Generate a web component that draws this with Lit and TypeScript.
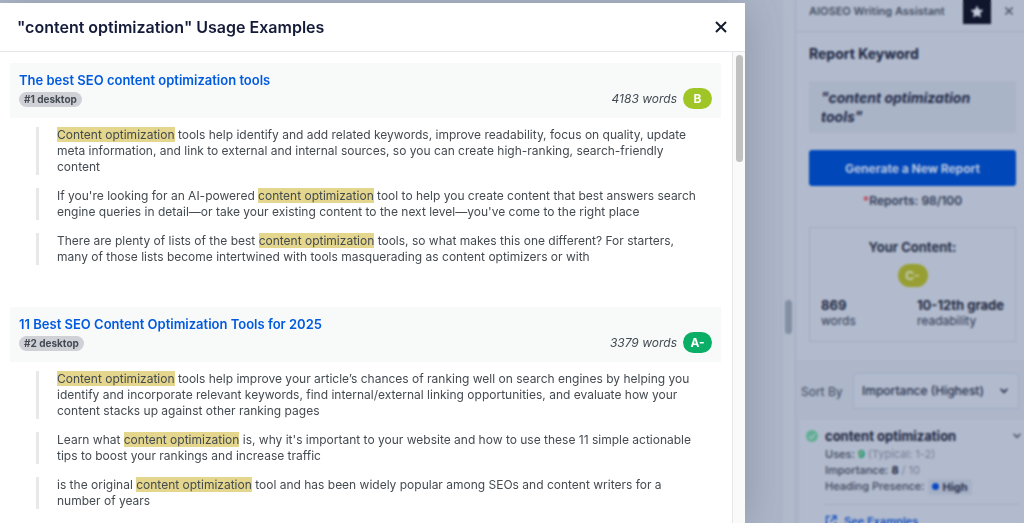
import { LitElement, html, css, svg } from "lit";
import { customElement, property, state } from "lit/decorators.js";

interface Competitor {
  title: string;
  rank: string;
  words: number;
  grade: string;
  tone: "lime" | "green";
  excerpts: string[];
}

const KEYWORD = "content optimization";

const COMPETITORS: Competitor[] = [
  {
    title: "The best SEO content optimization tools",
    rank: "#1 desktop",
    words: 4183,
    grade: "B",
    tone: "lime",
    excerpts: [
      "Content optimization tools help identify and add related keywords, improve readability, focus on quality, update meta information, and link to external and internal sources, so you can create high-ranking, search-friendly content",
      "If you're looking for an AI-powered content optimization tool to help you create content that best answers search engine queries in detail—or take your existing content to the next level—you've come to the right place",
      "There are plenty of lists of the best content optimization tools, so what makes this one different? For starters, many of those lists become intertwined with tools masquerading as content optimizers or with",
    ],
  },
  {
    title: "11 Best SEO Content Optimization Tools for 2025",
    rank: "#2 desktop",
    words: 3379,
    grade: "A-",
    tone: "green",
    excerpts: [
      "Content optimization tools help improve your article’s chances of ranking well on search engines by helping you identify and incorporate relevant keywords, find internal/external linking opportunities, and evaluate how your content stacks up against other ranking pages",
      "Learn what content optimization is, why it's important to your website and how to use these 11 simple actionable tips to boost your rankings and increase traffic",
      "is the original content optimization tool and has been widely popular among SEOs and content writers for a number of years",
    ],
  },
];

const cross = svg`<path d="M2 2 12 12M12 2 2 12" fill="none" stroke="currentColor" stroke-width="2"/>`;
const chevron = svg`<path d="M2 3.5 6 7.5 10 3.5" fill="none" stroke="currentColor" stroke-width="2"/>`;

@customElement("usage-example")
class UsageExample extends LitElement {
  @property({ attribute: false }) item!: Competitor;

  static styles = css`
    :host { display: block; }
    .head {
      display: flex;
      justify-content: space-between;
      align-items: flex-end;
      padding: 8px 9px 9px;
      background: #f8faf9;
    }
    .link {
      display: block;
      font-size: 13px;
      line-height: 18px;
      font-weight: 600;
      color: #005ae0;
      text-decoration: none;
    }
    .rank {
      display: inline-block;
      margin-top: 3px;
      padding: 0 5px;
      border-radius: 8px;
      background: #d0d1d7;
      color: #434a52;
      font-size: 10px;
      line-height: 15px;
      font-weight: 700;
      vertical-align: top;
    }
    .stats {
      display: flex;
      align-items: center;
      gap: 6px;
      font-size: 12px;
      font-style: italic;
      color: #434a52;
    }
    .grade {
      min-width: 29px;
      border-radius: 11px;
      color: #fff;
      font-size: 12px;
      line-height: 21px;
      font-style: normal;
      font-weight: 700;
      text-align: center;
    }
    .lime { background: #9fc626; }
    .green { background: #0aae67; }
    .quotes {
      display: flex;
      flex-direction: column;
      gap: 13px;
      padding: 9px 24px 0 26px;
    }
    .quote {
      margin: 0;
      padding-left: 18px;
      border-left: 3px solid #e8e8eb;
      font-size: 12px;
      line-height: 16px;
      color: #434a50;
    }
    mark { background: #e4d68d; color: inherit; }
  `;

  private highlight(text: string) {
    const at = text.toLowerCase().indexOf(KEYWORD);
    const end = at + KEYWORD.length;
    return html`${text.slice(0, at)}<mark>${text.slice(at, end)}</mark>${text.slice(end)}`;
  }

  render() {
    const { title, rank, words, grade, tone, excerpts } = this.item;
    return html`
      <div class="head">
        <div>
          <a class="link" href="#">${title}</a>
          <span class="rank">${rank}</span>
        </div>
        <div class="stats">
          <span>${words} words</span>
          <span class="grade ${tone}">${grade}</span>
        </div>
      </div>
      <div class="quotes">
        ${excerpts.map((e) => html`<blockquote class="quote">${this.highlight(e)}</blockquote>`)}
      </div>
    `;
  }
}

@customElement("writing-assistant")
class WritingAssistant extends LitElement {
  static styles = css`
    :host {
      display: block;
      background: #b2bbcd;
      border-left: 1px solid #a1abc0;
      color: #2c3650;
      font-size: 12px;
    }
    button { font-family: inherit; border: 0; padding: 0; cursor: pointer; }
    .bar {
      display: flex;
      align-items: flex-start;
      height: 32px;
      padding: 0 10px 0 13px;
      border-bottom: 1px solid #a1abc0;
      box-sizing: border-box;
    }
    .name { flex: 1; font-size: 11px; line-height: 22px; font-weight: 600; color: #454f64; }
    .star {
      display: grid;
      place-items: center;
      width: 28px;
      height: 24px;
      background: #10162c;
      color: #c3cbdb;
    }
    .close { margin-left: 13px; height: 22px; background: none; color: #454f64; line-height: 0; }
    .report { padding: 12px 8px 18px 13px; }
    h2 { margin: 0; font-size: 14px; line-height: 20px; font-weight: 700; color: #18233f; }
    .keyword {
      margin-top: 17px;
      padding: 7px 12px;
      background: #aab4c7;
      font-size: 14px;
      line-height: 19px;
      font-style: italic;
      font-weight: 700;
      color: #1f2a48;
    }
    .generate {
      display: block;
      width: 100%;
      height: 36px;
      margin-top: 17px;
      border-radius: 3px;
      background: #0047b9;
      color: #b9c6e0;
      font-size: 12px;
      font-weight: 700;
    }
    .quota { margin: 7px 0 0; line-height: 16px; font-weight: 600; text-align: center; color: #303a56; }
    .star-note { color: #c23a55; }
    .content {
      margin-top: 18px;
      padding: 10px 11px 12px;
      border: 1px solid #a1abc0;
      text-align: center;
    }
    h3 { margin: 0; font-size: 13px; line-height: 18px; font-weight: 700; color: #262f48; }
    .grade {
      display: inline-block;
      width: 30px;
      margin-top: 8px;
      border-radius: 12px;
      background: #979f32;
      color: #c8cfc5;
      font-size: 12px;
      line-height: 23px;
      font-weight: 600;
      vertical-align: top;
    }
    .facts {
      display: flex;
      justify-content: space-between;
      margin-top: 10px;
      text-align: left;
      line-height: 16px;
    }
    .facts b { display: block; font-size: 13px; color: #1e273f; }
    .terms { background: #adb7c9; }
    .sort {
      display: flex;
      align-items: center;
      justify-content: space-between;
      padding: 13px 5px 11px;
    }
    .sort label { color: #3b455c; }
    .pick { position: relative; flex: 0 0 166px; color: #26304c; }
    select {
      appearance: none;
      width: 100%;
      height: 36px;
      padding: 0 28px 0 8px;
      border: 1px solid #9eabc8;
      border-radius: 2px;
      background: #b2bbcd;
      color: inherit;
      font: 500 12px/16px Inter, sans-serif;
    }
    .caret { position: absolute; right: 10px; top: 13px; pointer-events: none; }
    .term {
      display: grid;
      grid-template-columns: 12px 1fr;
      column-gap: 7px;
      margin-left: 4px;
      padding: 7px 5px 20px 6px;
      background: #b2bbcd;
    }
    .check { margin-top: 3px; }
    .term-head { display: flex; justify-content: space-between; align-items: center; }
    .term-head button { background: none; color: #4b566e; line-height: 0; margin-right: -3px; }
    .term h3 { color: #1c2540; }
    .row { line-height: 16px; font-weight: 500; font-size: 11px; color: #3c465d; }
    .rows { padding-top: 1px; padding-bottom: 9px; border-bottom: 1px solid #a1abc0; }
    .muted { color: #76819a; font-weight: 400; }
    .ok { color: #16925f; }
    .strong { color: #1c2540; }
    .level {
      display: inline-flex;
      align-items: center;
      gap: 4px;
      padding: 0 4px;
      border-radius: 2px;
      background: #a7b1c6;
      color: #26304c;
      font-weight: 700;
    }
    .dot { width: 7px; height: 7px; border-radius: 50%; background: #0a49c4; }
    .examples {
      display: flex;
      align-items: center;
      gap: 7px;
      margin-top: 8px;
      color: #1a57c2;
      font-size: 11px;
      line-height: 16px;
      font-weight: 600;
      text-decoration: none;
    }
  `;

  render() {
    return html`
      <header class="bar">
        <span class="name">AIOSEO Writing Assistant</span>
        <button class="star" aria-label="Pin">
          <svg width="14" height="14" viewBox="0 0 14 14">
            <path fill="currentColor" d="M7 .5 8.9 4.6 13.4 5.1 10.1 8.2 11 12.6 7 10.4 3 12.6 3.9 8.2.6 5.1 5.1 4.6Z" />
          </svg>
        </button>
        <button class="close" aria-label="Close sidebar">
          <svg width="10" height="10" viewBox="0 0 14 14">${cross}</svg>
        </button>
      </header>
      <section class="report">
        <h2>Report Keyword</h2>
        <div class="keyword">"content optimization tools"</div>
        <button class="generate">Generate a New Report</button>
        <p class="quota"><span class="star-note">*</span>Reports: 98/100</p>
        <div class="content">
          <h3>Your Content:</h3>
          <span class="grade">C-</span>
          <div class="facts">
            <div><b>869</b>words</div>
            <div><b>10-12th grade</b>readability</div>
          </div>
        </div>
      </section>
      <section class="terms">
        <div class="sort">
          <label for="sort">Sort By</label>
          <div class="pick">
            <select id="sort"><option>Importance (Highest)</option></select>
            <svg class="caret" width="10" height="10" viewBox="0 0 12 12">${chevron}</svg>
          </div>
        </div>
        <article class="term">
          <svg class="check" width="12" height="12" viewBox="0 0 12 12">
            <circle cx="6" cy="6" r="6" fill="#5fae93" />
            <path d="M3.2 6.2 5.2 8.2 9 4.2" fill="none" stroke="#b2bbcd" stroke-width="1.3" />
          </svg>
          <div>
            <div class="term-head">
              <h3>content optimization</h3>
              <button aria-label="Collapse">
                <svg width="10" height="10" viewBox="0 0 12 12">${chevron}</svg>
              </button>
            </div>
            <div class="rows">
              <div class="row">Uses: <b class="ok">9</b> <span class="muted">(Typical: 1-2)</span></div>
              <div class="row">Importance: <b class="strong">8</b> <span class="muted">/ 10</span></div>
              <div class="row">Heading Presence: <span class="level"><i class="dot"></i>High</span></div>
            </div>
            <a class="examples" href="#">
              <svg width="12" height="12" viewBox="0 0 12 12" fill="none" stroke="currentColor" stroke-width="1.5">
                <path d="M5 1.5H1.5V10.5H10.5V7M7 1H11V5M11 1 5.5 6.5" />
              </svg>
              See Examples
            </a>
          </div>
        </article>
      </section>
    `;
  }
}

@customElement("app-root")
class AppRoot extends LitElement {
  @state() private competitors = COMPETITORS;

  static styles = css`
    :host {
      display: block;
      position: relative;
      height: 100vh;
      overflow: hidden;
      background: #adb7c9;
      font-family: Inter, sans-serif;
    }
    .page { display: flex; height: 100%; overflow: hidden; }
    .editor { flex: 1; }
    .resize {
      display: flex;
      align-items: center;
      width: 14px;
      box-sizing: border-box;
      border-left: 1px solid #a9b3c6;
      background: #b0bacb;
    }
    .grip {
      width: 7px;
      height: 34px;
      margin-left: 3px;
      margin-top: 111px;
      border-radius: 4px;
      background: #8490a5;
    }
    .sidebar { flex: 0 0 228px; height: 100%; }
    .veil { position: absolute; inset: 0; backdrop-filter: blur(1px); }
    .modal {
      position: absolute;
      inset: 3px 279px 0 0;
      display: flex;
      flex-direction: column;
      background: #fff;
      box-shadow: 0 4px 40px rgba(60, 65, 80, 0.3);
    }
    .top {
      display: flex;
      align-items: center;
      justify-content: space-between;
      padding: 12px 17px;
      border-bottom: 1px solid #e6e7ea;
    }
    h1 { margin: 0; font-size: 16px; line-height: 24px; font-weight: 600; color: #141b38; }
    .close { border: 0; padding: 0; background: none; color: #141b2c; line-height: 0; cursor: pointer; }
    .body { flex: 1; display: flex; min-height: 0; }
    .list {
      flex: 1;
      display: flex;
      flex-direction: column;
      gap: 42px;
      padding: 11px 11px 0 10px;
      overflow: hidden;
    }
    .list > * { flex: none; }
    .track {
      width: 13px;
      box-sizing: border-box;
      padding: 3px 2px;
      border-left: 1px solid #e6e7e9;
      background: #fafafa;
    }
    .thumb { width: 7px; height: 107px; margin: 0 auto; border-radius: 4px; background: #c1c1c1; }
  `;

  render() {
    return html`
      <div class="page">
        <main class="editor"></main>
        <div class="resize"><div class="grip"></div></div>
        <writing-assistant class="sidebar"></writing-assistant>
      </div>
      <div class="veil"></div>
      <div class="modal" role="dialog" aria-labelledby="heading">
        <header class="top">
          <h1 id="heading">"${KEYWORD}" Usage Examples</h1>
          <button class="close" aria-label="Close">
            <svg width="14" height="14" viewBox="0 0 14 14">${cross}</svg>
          </button>
        </header>
        <div class="body">
          <div class="list">
            ${this.competitors.map((c) => html`<usage-example .item=${c}></usage-example>`)}
          </div>
          <div class="track"><div class="thumb"></div></div>
        </div>
      </div>
    `;
  }
}
